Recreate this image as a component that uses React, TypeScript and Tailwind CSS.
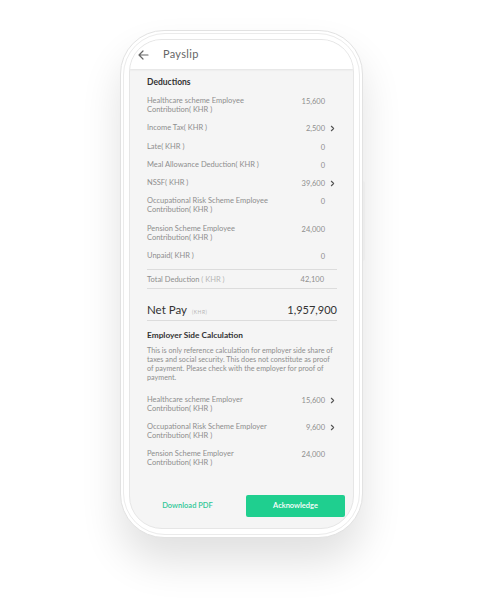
import { ChevronRight } from "lucide-react";

type Row = { label: string; value: string; more?: boolean };

const DEDUCTIONS: Row[] = [
  { label: "Healthcare scheme Employee Contribution( KHR )", value: "15,600" },
  { label: "Income Tax( KHR )", value: "2,500", more: true },
  { label: "Late( KHR )", value: "0" },
  { label: "Meal Allowance Deduction( KHR )", value: "0" },
  { label: "NSSF( KHR )", value: "39,600", more: true },
  { label: "Occupational Risk Scheme Employee Contribution( KHR )", value: "0" },
  { label: "Pension Scheme Employee Contribution( KHR )", value: "24,000" },
  { label: "Unpaid( KHR )", value: "0" },
];

const EMPLOYER: Row[] = [
  { label: "Healthcare scheme Employer Contribution( KHR )", value: "15,600", more: true },
  { label: "Occupational Risk Scheme Employer Contribution( KHR )", value: "9,600", more: true },
  { label: "Pension Scheme Employer Contribution( KHR )", value: "24,000" },
];

function LineItem({ label, value, more }: Row) {
  return (
    <div className="flex items-start text-[7.5px] leading-[9px] text-[#8e8e8e]">
      <span className="w-[132px]">{label}</span>
      <span className="relative top-[1px] ml-auto text-right">{value}</span>
      <span className="relative top-[1px] flex h-[9px] w-[12px] flex-none items-center justify-end">
        {more && <ChevronRight className="h-[9px] w-[9px] text-[#555]" strokeWidth={3} />}
      </span>
    </div>
  );
}

export default function App() {
  return (
    <div className="min-h-screen bg-white pl-[120px] pt-[30px]" style={{ fontFamily: "Lato, 'Open Sans', sans-serif" }}>
      <div className="relative h-[508px] w-[243px] rounded-[44px] border border-[#e2e2e2] bg-white p-[2px] shadow-[0_24px_40px_rgba(0,0,0,0.12)]">
        {/* side button */}
        <div className="absolute right-[-3px] top-[150px] h-[80px] w-[2px] rounded-r bg-[#ececec]" />
        <div className="h-full rounded-[42px] border border-[#ebebeb] p-[5px]">
          <div className="flex h-full flex-col overflow-hidden rounded-[33px] border border-[#e6e6e6] bg-[#f5f5f5]">
            {/* Header */}
            <div className="flex h-[29px] flex-none items-center bg-white pl-[8px] shadow-[0_1px_2px_rgba(0,0,0,0.08)]">
              <svg width="11" height="10" viewBox="0 0 11 10" fill="none" stroke="#666" strokeWidth="1.2" strokeLinecap="round" strokeLinejoin="round">
                <path d="M10 5H1M5 1L1 5l4 4" />
              </svg>
              <span className="ml-[14px] text-[11px] tracking-[0.3px] text-[#666]">Payslip</span>
            </div>

            {/* Body */}
            <div className="flex-1 overflow-hidden pl-[17px] pr-[16px] pt-[8px]">
              <h2 className="text-[8.5px] font-bold leading-[11px] text-[#333]">Deductions</h2>
              <div className="mt-[8px] flex flex-col gap-[9.3px]">
                {DEDUCTIONS.map((r) => (
                  <LineItem key={r.label} {...r} />
                ))}
              </div>

              <div className="mt-[9px] border-t border-[#dcdcdc] pt-[5px] pb-[4px]">
                <div className="flex text-[7.5px] leading-[9px] text-[#8e8e8e]">
                  <span>
                    Total Deduction <span className="text-[#b5b5b5]">( KHR )</span>
                  </span>
                  <span className="ml-auto">42,100</span>
                  <span className="w-[13px]" />
                </div>
              </div>

              <div className="flex items-baseline border-y border-[#dcdcdc] pt-[13px] pb-[2px] text-[#333]">
                <span className="text-[11.5px] leading-[16px]">Net Pay</span>
                <span className="ml-[5px] text-[5px] tracking-[0.5px] text-[#b5b5b5]">(KHR)</span>
                <span className="ml-auto text-[11px] leading-[16px]">1,957,900</span>
              </div>

              <h2 className="mt-[8.5px] text-[8.3px] font-bold leading-[11px] text-[#333]">Employer Side Calculation</h2>
              <p className="mt-[5px] text-[7.2px] leading-[9px] text-[#8e8e8e]">
                This is only reference calculation for employer side share of taxes and social security. This does not
                constitute as proof of payment. Please check with the employer for proof of payment.
              </p>
              <div className="mt-[13px] flex flex-col gap-[9px]">
                {EMPLOYER.map((r) => (
                  <LineItem key={r.label} {...r} />
                ))}
              </div>
            </div>

            {/* Footer */}
            <div className="flex flex-none gap-[9px] px-[8px] pb-[11px] pt-[10px]">
              <button className="flex h-[22px] flex-1 items-center justify-center text-[7.5px] font-semibold text-[#2ec796]">
                Download PDF
              </button>
              <button className="flex h-[22px] flex-1 items-center justify-center rounded-[2px] bg-[#1fcf8f] text-[7.5px] font-semibold text-white">
                Acknowledge
              </button>
            </div>
          </div>
        </div>
      </div>
    </div>
  );
}
